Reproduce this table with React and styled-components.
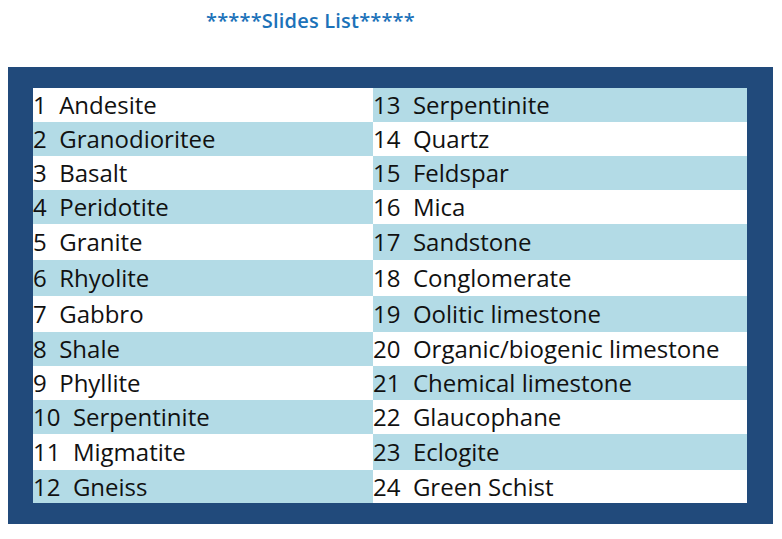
import React from 'react';
import styled, { createGlobalStyle } from 'styled-components';

const GlobalStyle = createGlobalStyle`
  body {
    margin: 8px;
    background: #ffffff;
    font-family: "Open Sans", "Liberation Sans", sans-serif;
  }
`;

// measured row heights from top to bottom
const ROW_HEIGHTS = [34, 34, 34, 34, 36, 36, 36, 34, 34, 34, 36, 33];

const slides = [
  'Andesite', 'Granodioritee', 'Basalt', 'Peridotite', 'Granite', 'Rhyolite',
  'Gabbro', 'Shale', 'Phyllite', 'Serpentinite', 'Migmatite', 'Gneiss',
  'Serpentinite', 'Quartz', 'Feldspar', 'Mica', 'Sandstone', 'Conglomerate',
  'Oolitic limestone', 'Organic/biogenic limestone', 'Chemical limestone',
  'Glaucophane', 'Eclogite', 'Green Schist'
];

const Header = styled.div`
  height: 59px;
  padding-left: 198px;
  box-sizing: border-box;
  padding-top: 0;
`;

const Title = styled.h2`
  margin: 0;
  font-family: "Open Sans", "Liberation Sans", sans-serif;
  font-size: 20px;
  font-weight: 600;
  color: #1c72b9;
  letter-spacing: 0.2px;
  line-height: 26px;
`;

const Panel = styled.div`
  width: 765px;
  box-sizing: border-box;
  background: #214a7b;
  padding: 21px 26px 21px 25px;
`;

const Table = styled.div`
  display: grid;
  grid-template-columns: 340px 374px;
  grid-template-rows: ${ROW_HEIGHTS.map((h) => `${h}px`).join(' ')};
  grid-auto-flow: column;
`;

const Cell = styled.div`
  display: flex;
  align-items: center;
  background: ${(props) => (props.$shaded ? '#b3dbe6' : '#ffffff')};
  color: #111111;
  font-size: 24px;
  line-height: 33px;
  padding-bottom: 1px;
  box-sizing: border-box;
  white-space: pre;
`;

function App() {
  return (
    <>
      <GlobalStyle />
      <Header>
        <Title>*****Slides List*****</Title>
      </Header>
      <Panel>
        <Table>
          {slides.map((name, i) => {
            const row = i % 12;
            const col = Math.floor(i / 12);
            const shaded = (row + col) % 2 === 1;
            return (
              <Cell key={i} $shaded={shaded}>
                {`${i + 1}  ${name}`}
              </Cell>
            );
          })}
        </Table>
      </Panel>
    </>
  );
}

export default App;
